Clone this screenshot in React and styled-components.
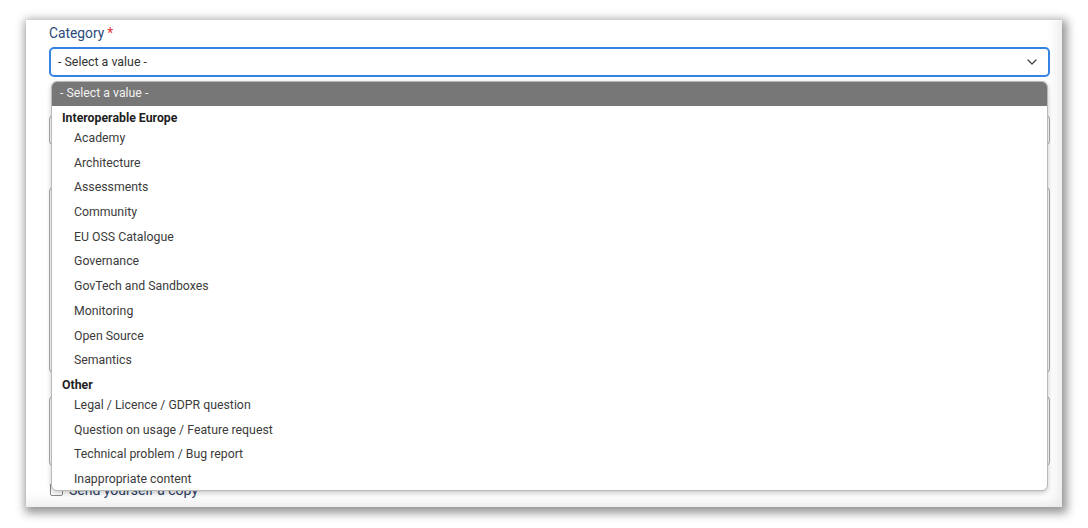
import React from "react";
import styled, { createGlobalStyle } from "styled-components";

const Global = createGlobalStyle`
  html, body { margin: 0; padding: 0; background: #ffffff; }
  body { font-family: Roboto, "Liberation Sans", Arial, sans-serif; }
  * { box-sizing: border-box; }
`;

const Page = styled.div`
  width: 1088px;
  height: 528px;
  padding: 20px 26px 21px 26px;
  background: #fff;
  overflow: hidden;
`;

const Card = styled.div`
  width: 1036px;
  height: 487px;
  background: #fff;
  padding: 5px 12px 0 23px;
  box-shadow: 2px 3px 9px 3px rgba(0, 0, 0, 0.42),
    inset -14px -14px 14px -10px rgba(0, 0, 0, 0.09);
  display: flex;
  flex-direction: column;
  overflow: hidden;
`;

const Label = styled.label`
  display: block;
  font-size: 13.8px;
  line-height: 17px;
  height: 17px;
  color: #2b4a78;
  margin-top: ${(p) => p.$mt || 0}px;
`;

const Req = styled.span`
  color: #e0313b;
  margin-left: 3px;
`;

const SelectWrap = styled.div`
  position: relative;
  margin-top: 4.5px;
`;

const SelectBox = styled.div`
  height: 30px;
  border: 2px solid #3584e4;
  border-radius: 5px;
  padding: 0 11px 0 7px;
  display: flex;
  align-items: center;
  justify-content: space-between;
  font-size: 12.4px;
  color: #333;
  background: #fff;
`;

const Chevron = styled.svg`
  width: 10px;
  height: 6px;
  display: block;
`;

const Menu = styled.div`
  position: absolute;
  top: 34px;
  left: 2px;
  right: 2px;
  height: 410px;
  background: #fff;
  border: 1px solid #b9b9b9;
  border-radius: 6px;
  box-shadow: 0 2px 5px rgba(0, 0, 0, 0.22);
  overflow: hidden;
  z-index: 5;
  font-size: 12.3px;
`;

const Highlight = styled.div`
  height: 24px;
  background: #777777;
  color: #f2f2f2;
  padding-left: 8px;
  padding-bottom: 1px;
  display: flex;
  align-items: center;
`;

const GroupHead = styled.div`
  height: 20.2px;
  padding: 4px 0 0 10px;
  line-height: 16px;
  font-weight: 700;
  color: #1f1f1f;
`;

const Option = styled.div`
  height: 24.7px;
  padding-left: 22px;
  display: flex;
  align-items: center;
  color: #3b3b3b;
`;

const Input = styled.div`
  height: ${(p) => p.$h || 30}px;
  border: 1px solid #a9a9a9;
  border-radius: 4px;
  margin-top: ${(p) => p.$mt || 3}px;
  background: #fff;
`;

const CheckRow = styled.div`
  display: flex;
  align-items: center;
  gap: 6px;
  margin-top: 16px;
  font-size: 14px;
  color: #2b3f63;
`;

const Box = styled.span`
  width: 13px;
  height: 13px;
  border: 1px solid #8a8a8a;
  border-radius: 2px;
  margin-left: 1px;
  background: #fff;
`;

const groups = [
  {
    name: "Interoperable Europe",
    items: [
      "Academy",
      "Architecture",
      "Assessments",
      "Community",
      "EU OSS Catalogue",
      "Governance",
      "GovTech and Sandboxes",
      "Monitoring",
      "Open Source",
      "Semantics",
    ],
  },
  {
    name: "Other",
    items: [
      "Legal / Licence / GDPR question",
      "Question on usage / Feature request",
      "Technical problem / Bug report",
      "Inappropriate content",
    ],
  },
];

export default function App() {
  return (
    <Page>
      <Global />
      <Card>
        <Label>
          Category<Req>*</Req>
        </Label>
        <SelectWrap>
          <SelectBox>
            <span>- Select a value -</span>
            <Chevron viewBox="0 0 10 6">
              <path d="M1 1l4 4 4-4" fill="none" stroke="#444" strokeWidth="1.3" strokeLinecap="round" strokeLinejoin="round" />
            </Chevron>
          </SelectBox>
          <Menu>
            <Highlight>- Select a value -</Highlight>
            {groups.map((g) => (
              <React.Fragment key={g.name}>
                <GroupHead>{g.name}</GroupHead>
                {g.items.map((it) => (
                  <Option key={it}>{it}</Option>
                ))}
              </React.Fragment>
            ))}
          </Menu>
        </SelectWrap>
        <Label $mt={18} />
        <Input $h={30} />
        <Label $mt={20} />
        <Input $h={186} $mt={5} />
        <Label $mt={4} />
        <Input $h={70} $mt={2} />
        <CheckRow>
          <Box />
          <span>Send yourself a copy</span>
        </CheckRow>
      </Card>
    </Page>
  );
}
